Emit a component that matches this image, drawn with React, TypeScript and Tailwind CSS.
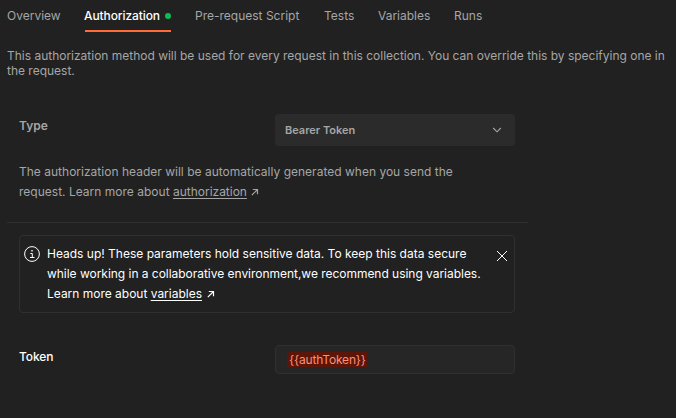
import type { ReactNode } from "react";

function Tab({ children, width }: { children: ReactNode; width: string }) {
  return <button className={`h-8 shrink-0 whitespace-nowrap text-left ${width}`}>{children}</button>;
}

function ArrowOut() {
  return (
    <svg className="ml-[4.5px] inline-block align-[0.5px]" width="8" height="8" viewBox="0 0 8 8" fill="none" stroke="currentColor" strokeWidth="1.2">
      <path d="M1.8 1.5h4.7v4.7M6.5 1.5.8 7.2" />
    </svg>
  );
}

export default function App() {
  return (
    <main className="h-[418px] w-[676px] overflow-hidden bg-[#212121] font-['Inter',sans-serif] text-[12px] text-[#a6a6a6]">
      <nav className="flex h-8 gap-6 pl-[7px] leading-8">
        <Tab width="w-[54px]">Overview</Tab>
        <button className="flex h-8 w-[86px] shrink-0 items-center justify-between border-b-2 border-[#ff6c37] pt-0.5 font-medium text-white">
          <span className="-ml-px tracking-[-0.1px]">Authorization</span>
          <span className="size-1.5 rounded-full bg-[#0cbb52]" />
        </button>
        <Tab width="w-[105px]">Pre-request Script</Tab>
        <Tab width="w-[30px]">Tests</Tab>
        <Tab width="w-[52px]">Variables</Tab>
        <Tab width="w-[28px]">Runs</Tab>
      </nav>

      <p className="mt-4 whitespace-nowrap pl-[7px] leading-[15px] tracking-[-0.01px]">
        This authorization method will be used for every request in this collection. You can override this by specifying one in
        <br />
        the request.
      </p>

      <section className="ml-[7px] mt-9 h-[109px] w-[521px] border-b border-[#303030] pl-3">
        <div className="flex h-8">
          <div className="w-64 pt-1 font-semibold leading-4">Type</div>
          <button className="flex h-8 w-60 items-center justify-between rounded bg-[#2b2b2b] pl-2.5 pr-[13px] text-[11px] font-semibold">
            <span>Bearer Token</span>
            <svg width="10" height="10" viewBox="0 0 10 10" fill="none" stroke="currentColor" strokeWidth="1.1">
              <path d="m1.2 3 3.8 3.8L8.8 3" />
            </svg>
          </button>
        </div>
        <p className="mt-4 whitespace-nowrap leading-5 tracking-[0.01px]">
          The authorization header will be automatically generated when you send the
          <br />
          request. Learn more about <span className="tracking-[-0.02px] underline underline-offset-2">authorization</span>
          <ArrowOut />
        </p>
      </section>

      <section className="ml-[19px] mt-3 flex h-[78px] w-[496px] rounded border border-[#303030] pl-1 pt-2 text-white">
        <svg className="mt-0.5 shrink-0" width="16" height="16" viewBox="0 0 16 16" fill="none" stroke="currentColor">
          <circle cx="8" cy="8" r="7.4" />
          <path d="M6.3 7.5h2v4M6 11.5h4.5" />
          <path d="M7.3 4.8h1.4" strokeWidth="1.4" />
        </svg>
        <p className="ml-[7px] w-[449px] shrink-0 whitespace-nowrap leading-5">
          Heads up! These parameters hold sensitive data. To keep this data secure
          <br />
          <span className="tracking-[-0.03px]">while working in a collaborative environment,we recommend using variables.</span>
          <br />
          <span className="tracking-[-0.01px]">Learn more about <span className="underline underline-offset-2">variables</span></span>
          <ArrowOut />
        </p>
        <svg className="mt-1.5 shrink-0" width="12" height="12" viewBox="0 0 12 12" fill="none" stroke="currentColor">
          <path d="m1 1 10 10M11 1 1 11" />
        </svg>
      </section>

      <div className="ml-[19px] mt-8 flex">
        <div className="w-64 pt-1 font-medium leading-4 tracking-[-0.1px] text-white">Token</div>
        <div className="flex h-[29px] w-60 items-center rounded border border-[#303030] bg-[#262626] pl-[11px]">
          <span className="h-[15px] w-20 bg-[#5b1609] pl-0.5 leading-[15px] tracking-[-0.17px] text-[#ff8e77]">{"{{authToken}}"}</span>
        </div>
      </div>
    </main>
  );
}
